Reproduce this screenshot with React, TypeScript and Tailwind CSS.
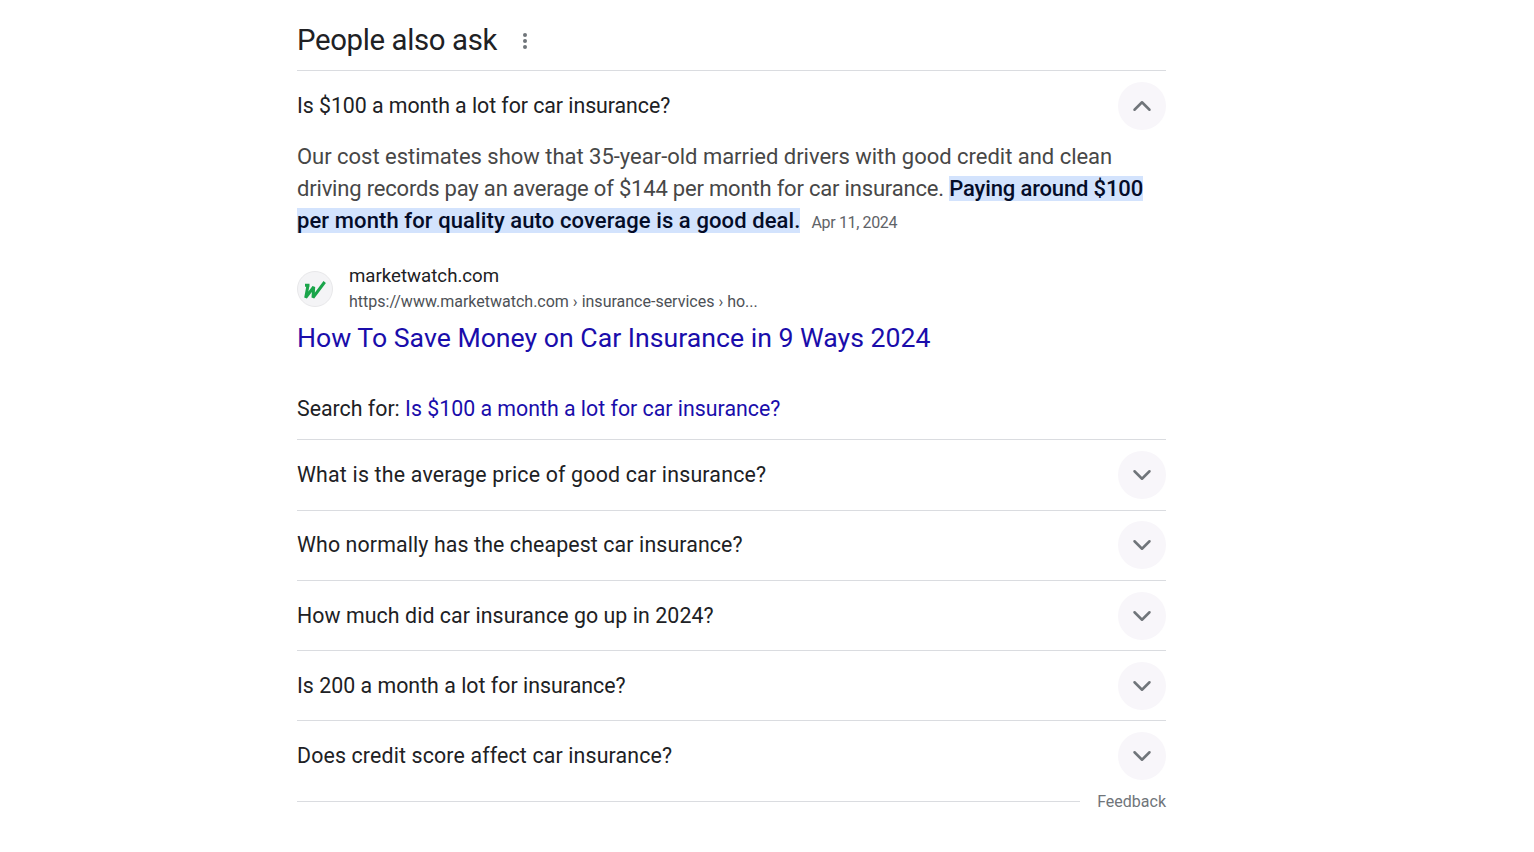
import React from 'react';
import { ChevronDown, ChevronUp } from 'lucide-react';

const questions = [
  { text: 'What is the average price of good car insurance?', track: 'tracking-[0.2px]' },
  { text: 'Who normally has the cheapest car insurance?', track: 'tracking-[0.12px]' },
  { text: 'How much did car insurance go up in 2024?', track: 'tracking-[0.075px]' },
  { text: 'Is 200 a month a lot for insurance?', track: 'tracking-[0.02px]' },
  { text: 'Does credit score affect car insurance?', track: 'tracking-[0.15px]' },
];

const Toggle = ({ open }: { open?: boolean }) => (
  <div className="flex h-[48px] w-[48px] shrink-0 items-center justify-center rounded-full bg-[#f8f6fa] text-[#70757a]">
    {open ? <ChevronUp size={30} strokeWidth={2} /> : <ChevronDown size={30} strokeWidth={2} />}
  </div>
);

const Question = ({ text, track, open }: { text: string; track: string; open?: boolean }) => (
  <div className="flex h-[69.3px] items-center justify-between">
    <span className={`text-[21.33px] text-[#202124] ${track}`}>{text}</span>
    <Toggle open={open} />
  </div>
);

export default function App() {
  return (
    <div className="min-h-[852px] bg-white font-['Roboto',sans-serif]">
      <div className="ml-[297px] w-[869px]">
        <div className="flex h-[70px] items-center gap-[26px] pt-[12px]">
          <h2 className="text-[29.33px] font-normal tracking-[-0.35px] text-[#202124]">People also ask</h2>
          <div className="flex flex-col gap-[2px]">
            <span className="h-[4px] w-[4px] rounded-full bg-[#70757a]" />
            <span className="h-[4px] w-[4px] rounded-full bg-[#70757a]" />
            <span className="h-[4px] w-[4px] rounded-full bg-[#70757a]" />
          </div>
        </div>

        <div className="border-t border-[#dadce0]">
          <Question text="Is $100 a month a lot for car insurance?" track="tracking-[-0.05px]" open />
          <p className="mt-[1px] text-[22px] leading-[32px] text-[#474747]">
            <span className="tracking-[-0.02px]">Our cost estimates show that 35-year-old married drivers with good credit and clean </span>
            <span className="tracking-[-0.19px]">driving records pay an average of $144 per month for car insurance.</span>{' '}
            <span className="bg-[#d3e3fd] font-medium text-[#040c28]">
              <span className="tracking-[-0.15px]">Paying around $100 </span>
              <span className="tracking-[0.1px]">per month for quality auto coverage is a good deal.</span>
            </span>
            <span className="ml-[11px] text-[16px] tracking-[-0.35px] text-[#5f6368]">Apr 11, 2024</span>
          </p>

          <div className="mt-[24px] flex items-center gap-[16px]">
            <div className="flex h-[36px] w-[36px] items-center justify-center rounded-full border border-[#e8e8ea] bg-[#f4f4f6]">
              <svg width="26" height="20" viewBox="0 0 26 20" fill="none">
                <path d="M3 6.3 H7.5 M6 6.3 L3.7 18.7 L11.7 8 L11 18.7 L22.7 3" stroke="#1aa54a" strokeWidth="3" strokeLinejoin="bevel" />
              </svg>
            </div>
            <div>
              <div className="text-[18.67px] leading-[26px] text-[#202124]">marketwatch.com</div>
              <div className="mt-[1px] text-[16px] leading-[24px] text-[#4d5156]">https://www.marketwatch.com › insurance-services › ho...</div>
            </div>
          </div>

          <a className="mt-[6px] block text-[26.67px] leading-[36px] text-[#1a0dab]">How To Save Money on Car Insurance in 9 Ways 2024</a>

          <div className="mt-[37px] pb-[14px] text-[21.33px] leading-[32px] text-[#202124]">
            Search for: <a className="text-[#1a0dab]">Is $100 a month a lot for car insurance?</a>
          </div>
        </div>

        {questions.map((q) => (
          <div key={q.text} className="border-t border-[#dadce0]">
            <Question text={q.text} track={q.track} />
          </div>
        ))}

        <div className="flex items-start gap-[17px]">
          <div className="mt-[10px] h-px flex-1 bg-[#dadce0]" />
          <span className="mt-[1px] text-[16px] leading-[20px] text-[#70757a]">Feedback</span>
        </div>
      </div>
    </div>
  );
}
